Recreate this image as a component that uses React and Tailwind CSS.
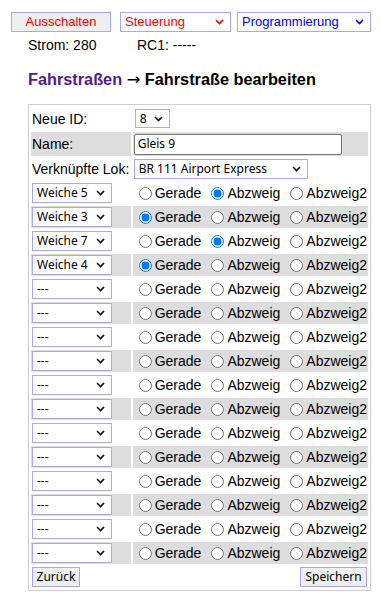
import React from 'react';

const FORM_FONT = "font-['Noto_Sans',sans-serif]";

const Chevron = ({ color = '#000' }) => (
    <svg width="9" height="6" viewBox="0 0 9 6" className="shrink-0">
        <path d="M1 1l3.5 3.5L8 1" fill="none" stroke={color} strokeWidth="1.6" />
    </svg>
);

const FakeSelect = ({ value, className = '', color = '#000' }) => (
    <div className={`flex items-center justify-between border border-[#a8a8f2] bg-white pl-[4px] pr-[6px] text-[12px] ${FORM_FONT} ${className}`}>
        <span className="leading-none">{value}</span>
        <Chevron color={color} />
    </div>
);

const Radio = ({ label, checked, name }) => (
    <label className="flex items-center">
        <input type="radio" name={name} defaultChecked={checked} className="m-0 ml-[5px] mr-[3px] size-[13px] accent-[#0075ff]" />
        <span>{label}</span>
    </label>
);

const weichen = [
    { name: 'Weiche 5', sel: 1 },
    { name: 'Weiche 3', sel: 0 },
    { name: 'Weiche 7', sel: 1 },
    { name: 'Weiche 4', sel: 0 },
    ...Array.from({ length: 12 }, () => ({ name: '---', sel: -1 })),
];

export default function App() {
    return (
        <div className="min-h-[604px] w-[381px] bg-white text-black font-['Liberation_Sans',Arial,sans-serif] text-[14px]">
            {/* Top bar */}
            <div className="flex pt-[12px] pl-[11px]">
                <div className="flex h-[20px] w-[100px] items-center justify-center border border-[#a8a8f2] bg-[#efefef] text-[13px] text-[#ff0000]">
                    Ausschalten
                </div>
                <div className="ml-[9px] flex h-[20px] w-[111px] items-center justify-between border border-[#a8a8f2] pl-[4px] pr-[6px] text-[13px] text-[#ff0000]">
                    <span>Steuerung</span>
                    <Chevron color="#ff0000" />
                </div>
                <div className="ml-[6px] flex h-[20px] w-[134px] items-center justify-between border border-[#a8a8f2] pl-[4px] pr-[6px] text-[13px] text-[#0000ff]">
                    <span>Programmierung</span>
                    <Chevron color="#0000ff" />
                </div>
            </div>

            <div className="flex pl-[28px] mt-[5px] leading-[16px]">
                <span className="w-[109px]">Strom: 280</span>
                <span>RC1: -----</span>
            </div>

            <h1 className="pl-[28px] mt-[17px] text-[16.3px] font-bold leading-[18px]">
                <span className="text-[#551a8b]">Fahrstraßen</span>{' '}
                <span className="font-['DejaVu_Sans',sans-serif] font-normal">→</span> Fahrstraße bearbeiten
            </h1>

            {/* Edit table */}
            <table className="ml-[28px] mt-[15px] w-[343px] border border-[#cfcfcf] border-separate border-spacing-[2px]">
                <tbody>
                    <tr>
                        <td className="h-[23px] w-[101px] p-[1px] align-middle leading-[16px]">Neue ID:</td>
                        <td className="h-[23px] p-[1px] align-middle">
                            <FakeSelect value="8" className="ml-[1px] h-[19px] w-[35px]" />
                        </td>
                    </tr>
                    <tr className="bg-[#dddddd]">
                        <td className="h-[24px] p-[1px] align-middle leading-[16px]">Name:</td>
                        <td className="h-[24px] p-[1px] align-middle">
                            <div className={`flex h-[21px] w-[208px] items-center rounded-[2px] border border-[#767676] bg-white pl-[3px] text-[12px] ${FORM_FONT}`}>
                                Gleis 9
                            </div>
                        </td>
                    </tr>
                    <tr>
                        <td className="h-[22px] p-[1px] align-middle whitespace-nowrap leading-[16px]">Verknüpfte Lok:</td>
                        <td className="h-[22px] p-[1px] align-middle">
                            <FakeSelect value="BR 111 Airport Express" className="h-[20px] w-[174px]" />
                        </td>
                    </tr>
                    {weichen.map((w, i) => (
                        <tr key={i} className={i % 2 === 1 ? 'bg-[#dddddd]' : ''}>
                            <td className="h-[22px] p-[1px] align-middle">
                                <FakeSelect value={w.name} className="h-[20px] w-[80px]" />
                            </td>
                            <td className="h-[22px] p-[1px] align-middle">
                                <div className="flex h-[20px] items-center gap-[5px] whitespace-nowrap leading-[16px]">
                                    <Radio name={`w${i}`} label="Gerade" checked={w.sel === 0} />
                                    <Radio name={`w${i}`} label="Abzweig" checked={w.sel === 1} />
                                    <Radio name={`w${i}`} label="Abzweig2" checked={w.sel === 2} />
                                </div>
                            </td>
                        </tr>
                    ))}
                    <tr>
                        <td className="h-[22px] p-[1px] align-middle">
                            <div className={`flex h-[20px] w-[48px] items-center justify-center border border-[#a8a8f2] bg-[#efefef] text-[12px] ${FORM_FONT}`}>
                                Zurück
                            </div>
                        </td>
                        <td className="h-[22px] p-[1px] align-middle">
                            <div className="flex justify-end">
                                <div className={`flex h-[20px] w-[67px] items-center justify-center border border-[#a8a8f2] bg-[#efefef] text-[12px] ${FORM_FONT}`}>
                                    Speichern
                                </div>
                            </div>
                        </td>
                    </tr>
                </tbody>
            </table>
        </div>
    );
}
